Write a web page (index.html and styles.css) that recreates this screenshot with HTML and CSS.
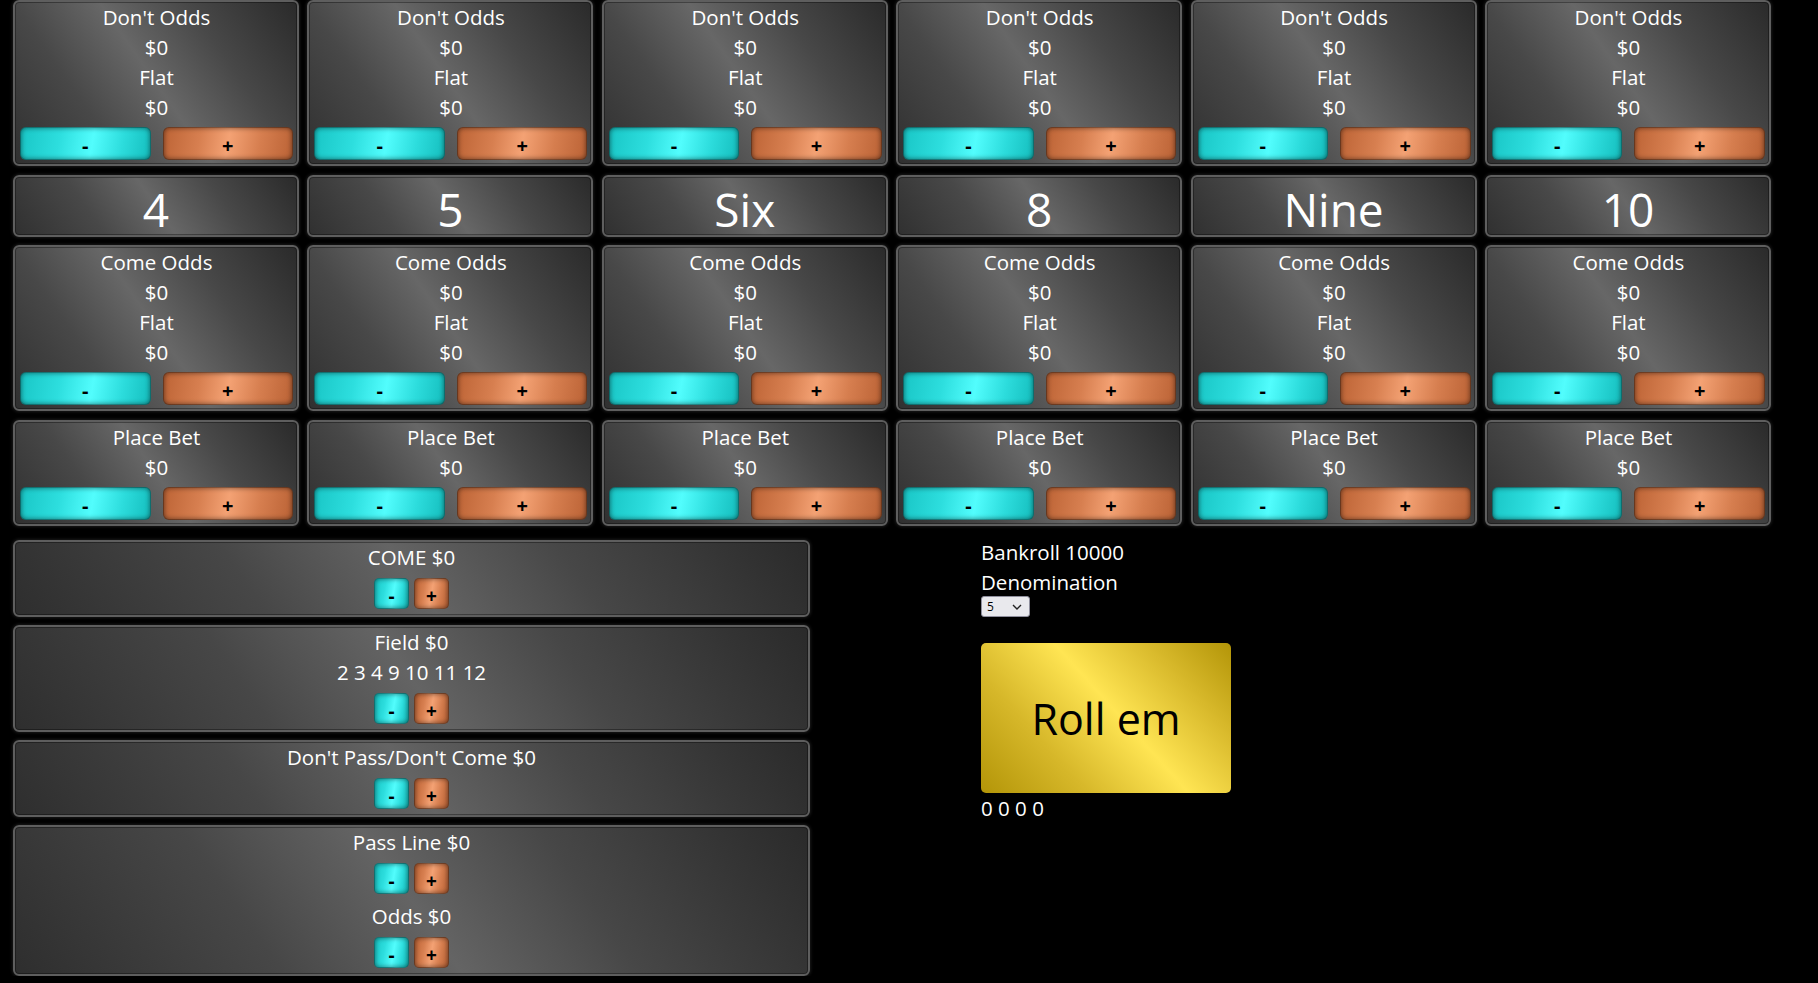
FILE: index.html
```html
<!DOCTYPE html>
<html lang="en">
<head>
<meta charset="utf-8">
<title>Craps</title>
<link rel="stylesheet" href="styles.css">
</head>
<body>
<div class="table">
  <div class="grid">
    <div class="card bet"><div>Don't Odds</div><div>$0</div><div>Flat</div><div>$0</div><div class="btns"><button class="btn minus">-</button><button class="btn plus">+</button></div></div>
    <div class="card bet"><div>Don't Odds</div><div>$0</div><div>Flat</div><div>$0</div><div class="btns"><button class="btn minus">-</button><button class="btn plus">+</button></div></div>
    <div class="card bet"><div>Don't Odds</div><div>$0</div><div>Flat</div><div>$0</div><div class="btns"><button class="btn minus">-</button><button class="btn plus">+</button></div></div>
    <div class="card bet"><div>Don't Odds</div><div>$0</div><div>Flat</div><div>$0</div><div class="btns"><button class="btn minus">-</button><button class="btn plus">+</button></div></div>
    <div class="card bet"><div>Don't Odds</div><div>$0</div><div>Flat</div><div>$0</div><div class="btns"><button class="btn minus">-</button><button class="btn plus">+</button></div></div>
    <div class="card bet"><div>Don't Odds</div><div>$0</div><div>Flat</div><div>$0</div><div class="btns"><button class="btn minus">-</button><button class="btn plus">+</button></div></div>

    <div class="card point">4</div>
    <div class="card point">5</div>
    <div class="card point">Six</div>
    <div class="card point">8</div>
    <div class="card point">Nine</div>
    <div class="card point">10</div>

    <div class="card bet"><div>Come Odds</div><div>$0</div><div>Flat</div><div>$0</div><div class="btns"><button class="btn minus">-</button><button class="btn plus">+</button></div></div>
    <div class="card bet"><div>Come Odds</div><div>$0</div><div>Flat</div><div>$0</div><div class="btns"><button class="btn minus">-</button><button class="btn plus">+</button></div></div>
    <div class="card bet"><div>Come Odds</div><div>$0</div><div>Flat</div><div>$0</div><div class="btns"><button class="btn minus">-</button><button class="btn plus">+</button></div></div>
    <div class="card bet"><div>Come Odds</div><div>$0</div><div>Flat</div><div>$0</div><div class="btns"><button class="btn minus">-</button><button class="btn plus">+</button></div></div>
    <div class="card bet"><div>Come Odds</div><div>$0</div><div>Flat</div><div>$0</div><div class="btns"><button class="btn minus">-</button><button class="btn plus">+</button></div></div>
    <div class="card bet"><div>Come Odds</div><div>$0</div><div>Flat</div><div>$0</div><div class="btns"><button class="btn minus">-</button><button class="btn plus">+</button></div></div>

    <div class="card bet"><div>Place Bet</div><div>$0</div><div class="btns"><button class="btn minus">-</button><button class="btn plus">+</button></div></div>
    <div class="card bet"><div>Place Bet</div><div>$0</div><div class="btns"><button class="btn minus">-</button><button class="btn plus">+</button></div></div>
    <div class="card bet"><div>Place Bet</div><div>$0</div><div class="btns"><button class="btn minus">-</button><button class="btn plus">+</button></div></div>
    <div class="card bet"><div>Place Bet</div><div>$0</div><div class="btns"><button class="btn minus">-</button><button class="btn plus">+</button></div></div>
    <div class="card bet"><div>Place Bet</div><div>$0</div><div class="btns"><button class="btn minus">-</button><button class="btn plus">+</button></div></div>
    <div class="card bet"><div>Place Bet</div><div>$0</div><div class="btns"><button class="btn minus">-</button><button class="btn plus">+</button></div></div>
  </div>

  <div class="lower">
    <div class="bets">
      <div class="card panel">
        <div>COME $0</div>
        <div class="mini"><button class="btn minus">-</button><button class="btn plus">+</button></div>
      </div>
      <div class="card panel">
        <div>Field $0</div>
        <div>2 3 4 9 10 11 12</div>
        <div class="mini"><button class="btn minus">-</button><button class="btn plus">+</button></div>
      </div>
      <div class="card panel">
        <div>Don't Pass/Don't Come $0</div>
        <div class="mini"><button class="btn minus">-</button><button class="btn plus">+</button></div>
      </div>
      <div class="card panel">
        <div>Pass Line $0</div>
        <div class="mini"><button class="btn minus">-</button><button class="btn plus">+</button></div>
        <div class="gap-line">Odds $0</div>
        <div class="mini"><button class="btn minus">-</button><button class="btn plus">+</button></div>
      </div>
    </div>

    <div class="controls">
      <div>Bankroll 10000</div>
      <div>Denomination</div>
      <div class="select-wrap">
        <select class="denom"><option>5</option><option>10</option><option>25</option></select>
        <svg class="chev" width="10" height="6" viewBox="0 0 10 6"><path d="M1 1 L5 5 L9 1" fill="none" stroke="#222" stroke-width="1.4"/></svg>
      </div>
      <button class="roll">Roll em</button>
      <div>0 0 0 0</div>
    </div>
  </div>
</div>
</body>
</html>
```

FILE: styles.css
```css
html, body {
  margin: 0;
  background: #000;
}

body {
  color: #fff;
  font-family: "Open Sans", "Noto Sans", sans-serif;
  font-size: 20.5px;
  line-height: 30px;
}

.table {
  padding-left: 13px;
}

.grid {
  display: grid;
  grid-template-columns: repeat(6, 286px);
  grid-template-rows: 166px 62px 166px 106px;
  column-gap: 8.4px;
  row-gap: 8.7px;
}

.card {
  box-sizing: border-box;
  border: 2px solid #5e5e5e;
  border-radius: 6px;
  background: linear-gradient(55deg, #303030 0%, #484848 28%, #676767 50%, #484848 72%, #2a2a2a 100%);
  box-shadow: 0 0 3px 1px rgba(120, 120, 120, 0.22), inset 0 0 0 1px rgba(0, 0, 0, 0.35);
  text-align: center;
}

.bet {
  padding: 0 4px 4px 5px;
}

.btns {
  display: grid;
  grid-template-columns: 1fr 1fr;
  column-gap: 12px;
  margin-top: 5px;
}

.btn {
  box-sizing: border-box;
  height: 33px;
  margin: 0;
  padding: 5px 0 0;
  border: 1px solid rgba(0, 0, 0, 0.45);
  border-radius: 6px;
  color: #000;
  font-family: "Open Sans", sans-serif;
  font-weight: bold;
  font-size: 20px;
  line-height: 24px;
  box-shadow: inset 0 0 5px rgba(0, 0, 0, 0.5);
}

.minus {
  background: linear-gradient(100deg, #19c6c6 0%, #2ddede 30%, #52fdfd 55%, #2cdcdc 78%, #15bebe 100%);
}

.plus {
  background: linear-gradient(100deg, #bd6436 0%, #d77f50 28%, #f4a274 50%, #d67e4f 74%, #bb6336 100%);
}

.point {
  font-size: 46px;
  line-height: 51px;
  padding-top: 7px;
}

.lower {
  display: flex;
  margin-top: 14px;
}

.bets {
  width: 797px;
  display: flex;
  flex-direction: column;
  gap: 8px;
}

.panel {
  background: linear-gradient(55deg, #2e2e2e 0%, #474747 30%, #646464 50%, #474747 70%, #2a2a2a 100%);
}

.mini {
  display: flex;
  justify-content: center;
  gap: 5px;
  margin: 6px 0;
}

.mini .btn {
  width: 35px;
  height: 31px;
  border-radius: 5px;
  padding-top: 4px;
  font-size: 19px;
}

.gap-line {
  margin-top: 7px;
}

.controls {
  margin-left: 171px;
  margin-top: -3px;
}

.select-wrap {
  position: relative;
  width: 49px;
  height: 21px;
  margin-top: -1px;
}

.denom {
  appearance: none;
  -webkit-appearance: none;
  display: block;
  box-sizing: border-box;
  width: 49px;
  height: 21px;
  margin: 0;
  padding: 0 0 0 5px;
  border: 1px solid #8f8f9d;
  border-radius: 3px;
  background: #e9e9ed;
  color: #000;
  font-family: "Open Sans", sans-serif;
  font-size: 12px;
  line-height: 19px;
}

.chev {
  position: absolute;
  right: 8px;
  top: 8px;
  pointer-events: none;
}

.roll {
  display: block;
  width: 250px;
  height: 150px;
  margin: 26px 0 0;
  padding: 0;
  border: none;
  border-radius: 5px;
  color: #000;
  font-family: "Open Sans", sans-serif;
  font-size: 43px;
  background: linear-gradient(48deg, #b39508 0%, #d7b82a 28%, #ffe553 54%, #d9ba2c 78%, #b39508 100%);
}
```
